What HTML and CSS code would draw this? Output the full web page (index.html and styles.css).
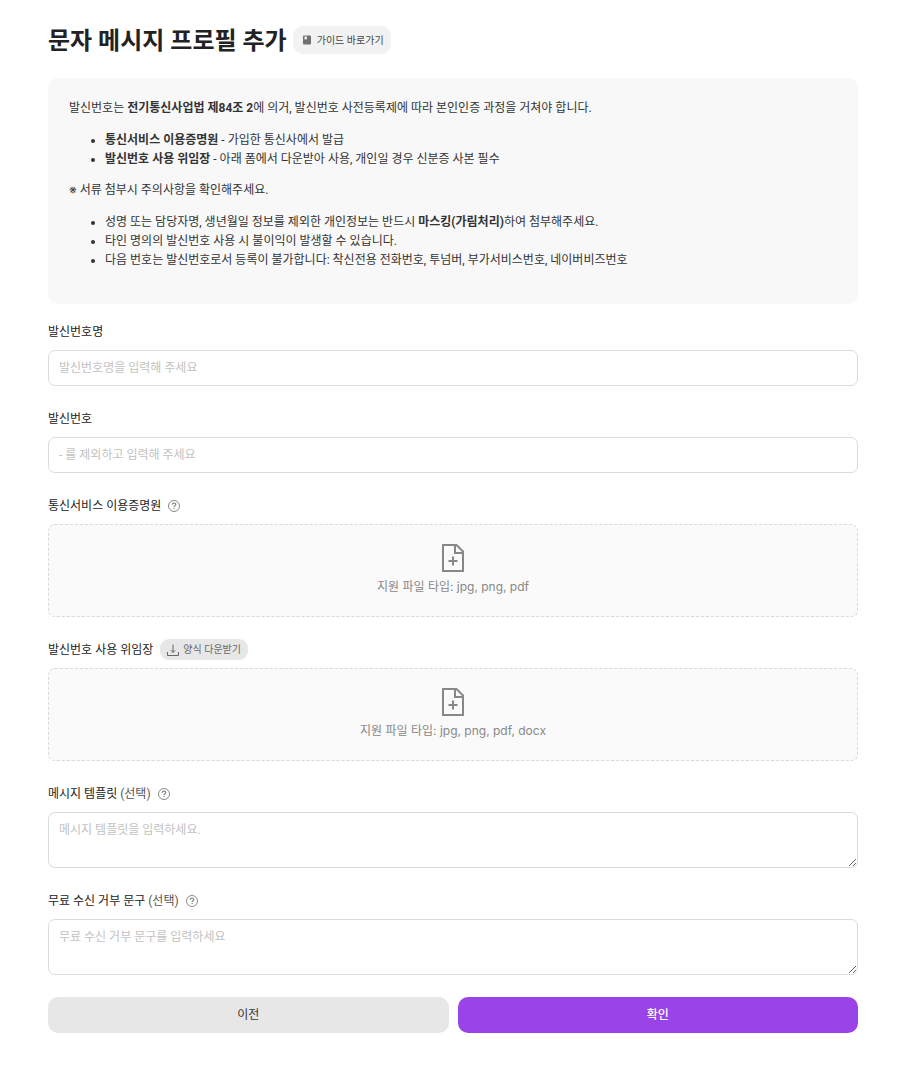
FILE: index.html
```html
<!DOCTYPE html>
<html lang="ko">
<head>
  <meta charset="UTF-8">
  <meta name="viewport" content="width=device-width, initial-scale=1">
  <title>문자 메시지 프로필 추가</title>
  <link rel="stylesheet" href="styles.css">
</head>
<body>
  <!-- 공통 아이콘 -->
  <svg class="icon-defs" aria-hidden="true">
    <symbol id="icon-help" viewBox="0 0 12 12">
      <circle cx="6" cy="6" r="5.5" fill="none" stroke="currentColor" stroke-width="1"/>
      <path d="M4.2 4.8C4.2 3.7 5 3.1 6 3.1s1.8.6 1.8 1.6c0 1.2-1.7 1.1-1.7 2.4" fill="none" stroke="currentColor" stroke-width="1.2"/>
      <rect x="5.5" y="7.8" width="1.2" height="1.2" fill="currentColor"/>
    </symbol>
    <symbol id="icon-file" viewBox="0 0 22 28">
      <path d="M1 1h13.5L21 7.5V27H1z" fill="none" stroke="currentColor" stroke-width="2"/>
      <path d="M13 1v8h8" fill="none" stroke="currentColor" stroke-width="2"/>
      <path d="M11 12.5v9M6.5 17h9" fill="none" stroke="currentColor" stroke-width="2"/>
    </symbol>
  </svg>

  <main class="page">
    <header class="page-header">
      <h1>문자 메시지 프로필 추가</h1>
      <button type="button" class="guide-btn">
        <svg class="icon-book" viewBox="0 0 8 10" aria-hidden="true">
          <path fill-rule="evenodd" d="M1 .5h6a1 1 0 0 1 1 1v7a1 1 0 0 1-1 1H1a1 1 0 0 1-1-1v-7a1 1 0 0 1 1-1zM1.5 1.5v3.3l1.2-.8 1.2.8V1.5z" fill="currentColor"/>
        </svg>
        가이드 바로가기
      </button>
    </header>

    <!-- 안내 -->
    <section class="notice">
      <p>발신번호는 <strong>전기통신사업법 제84조 2</strong>에 의거, 발신번호 사전등록제에 따라 본인인증 과정을 거쳐야 합니다.</p>
      <ul>
        <li><strong>통신서비스 이용증명원</strong> - 가입한 통신사에서 발급</li>
        <li><strong>발신번호 사용 위임장</strong> - 아래 폼에서 다운받아 사용, 개인일 경우 신분증 사본 필수</li>
      </ul>
      <p><span class="mark">※</span> 서류 첨부시 주의사항을 확인해주세요.</p>
      <ul>
        <li>성명 또는 담당자명, 생년월일 정보를 제외한 개인정보는 반드시 <strong>마스킹(가림처리)</strong>하여 첨부해주세요.</li>
        <li>타인 명의의 발신번호 사용 시 불이익이 발생할 수 있습니다.</li>
        <li>다음 번호는 발신번호로서 등록이 불가합니다: 착신전용 전화번호, 투넘버, 부가서비스번호, 네이버비즈번호</li>
      </ul>
    </section>

    <form class="profile-form">
      <div class="field">
        <div class="field-head"><label for="senderName">발신번호명</label></div>
        <input type="text" id="senderName" class="control" placeholder="발신번호명을 입력해 주세요">
      </div>

      <div class="field">
        <div class="field-head"><label for="senderNumber">발신번호</label></div>
        <input type="text" id="senderNumber" class="control" placeholder="- 를 제외하고 입력해 주세요">
      </div>

      <div class="field">
        <div class="field-head">
          <label for="certFile">통신서비스 이용증명원</label>
          <svg class="icon-help"><use href="#icon-help"/></svg>
        </div>
        <label class="upload">
          <input type="file" id="certFile" class="upload-input" accept=".jpg,.png,.pdf">
          <svg class="icon-file"><use href="#icon-file"/></svg>
          <span>지원 파일 타입: jpg, png, pdf</span>
        </label>
      </div>

      <div class="field">
        <div class="field-head">
          <label for="proxyFile">발신번호 사용 위임장</label>
          <button type="button" class="download-btn">
            <svg class="icon-download" viewBox="0 0 12 12" aria-hidden="true">
              <path d="M.5 8v3.5h11V8M6 .5v8M3.8 6.2L6 8.4l2.2-2.2" fill="none" stroke="currentColor" stroke-width="1"/>
            </svg>
            양식 다운받기
          </button>
        </div>
        <label class="upload">
          <input type="file" id="proxyFile" class="upload-input" accept=".jpg,.png,.pdf,.docx">
          <svg class="icon-file"><use href="#icon-file"/></svg>
          <span>지원 파일 타입: jpg, png, pdf, docx</span>
        </label>
      </div>

      <div class="field">
        <div class="field-head">
          <label for="template">메시지 템플릿 <span class="optional">(선택)</span></label>
          <svg class="icon-help"><use href="#icon-help"/></svg>
        </div>
        <textarea id="template" class="control" rows="2" placeholder="메시지 템플릿을 입력하세요."></textarea>
      </div>

      <div class="field">
        <div class="field-head">
          <label for="optOut">무료 수신 거부 문구 <span class="optional">(선택)</span></label>
          <svg class="icon-help"><use href="#icon-help"/></svg>
        </div>
        <textarea id="optOut" class="control" rows="2" placeholder="무료 수신 거부 문구를 입력하세요"></textarea>
      </div>

      <div class="actions">
        <button type="button" class="btn btn-prev">이전</button>
        <button type="submit" class="btn btn-ok">확인</button>
      </div>
    </form>
  </main>
</body>
</html>
```
FILE: styles.css
```css
* { box-sizing: border-box; }

body {
  margin: 0;
  background: #fff;
  color: #222;
  font-family: Roboto, "Noto Sans CJK KR", sans-serif;
  font-size: 12px;
  line-height: 19px;
}

button, input, textarea { font: inherit; color: inherit; }
button { border: none; cursor: pointer; }

.icon-defs { position: absolute; width: 0; height: 0; }

.page { padding: 24px 40px 48px 48px; }

/* 제목 */
.page-header {
  display: flex;
  align-items: center;
  gap: 6px;
  margin-bottom: 22px;
}
h1 {
  margin: 0;
  padding-top: 2px;
  font-size: 24px;
  line-height: 30px;
  font-weight: 700;
}
.guide-btn {
  display: flex;
  align-items: center;
  gap: 6px;
  height: 28px;
  padding: 0 7px 0 10px;
  border-radius: 10px;
  background: #f2f2f2;
  color: #444;
  font-size: 10px;
}
.icon-book { width: 8px; height: 10px; color: #707070; }

/* 안내 박스 */
.notice {
  margin-bottom: 17px;
  padding: 21px 21px 22px;
  border-radius: 10px;
  background: #f8f8f8;
  color: #333;
}
.notice p { margin: 0; }
.notice ul { margin: 13px 0 12px; padding-left: 36px; }
.mark { font-family: Inter, sans-serif; line-height: 1; }

/* 폼 */
.profile-form {
  display: flex;
  flex-direction: column;
  gap: 22px;
}
.field {
  display: flex;
  flex-direction: column;
  gap: 8px;
}
.field-head {
  display: flex;
  align-items: center;
  gap: 7px;
  height: 21px;
}
.field-head label { padding-top: 2px; }
.optional { color: #555; }
.icon-help { width: 12px; height: 12px; color: #888; }

.control {
  display: block;
  width: 100%;
  padding: 8px 10px;
  border: 1px solid #dbdbdb;
  border-radius: 7px;
  background: #fff;
  outline: none;
}
input.control { height: 36px; }
textarea.control { resize: vertical; }
.control::placeholder { color: #c2c2c2; }

.download-btn {
  display: flex;
  align-items: center;
  gap: 4px;
  height: 21px;
  padding: 0 7px;
  border-radius: 9px;
  background: #e7e7e7;
  color: #666;
  font-size: 10px;
}
.icon-download { width: 12px; height: 12px; }

.upload {
  position: relative;
  display: flex;
  flex-direction: column;
  align-items: center;
  gap: 5px;
  padding: 19px 20px 20px;
  border: 1px dashed #d9d9d9;
  border-radius: 7px;
  background: #fafafa;
  color: #888;
  font-family: Inter, "Noto Sans CJK KR", sans-serif;
  cursor: pointer;
}
.upload-input {
  position: absolute;
  width: 1px;
  height: 1px;
  opacity: 0;
}
.icon-file { width: 22px; height: 28px; }

/* 하단 버튼 */
.actions {
  display: grid;
  grid-template-columns: 1fr 1fr;
  gap: 9px;
}
.btn { height: 36px; border-radius: 10px; }
.btn-prev { background: #e7e7e7; color: #333; }
.btn-ok { background: #9a43e8; color: #fff; font-weight: 500; }
```
